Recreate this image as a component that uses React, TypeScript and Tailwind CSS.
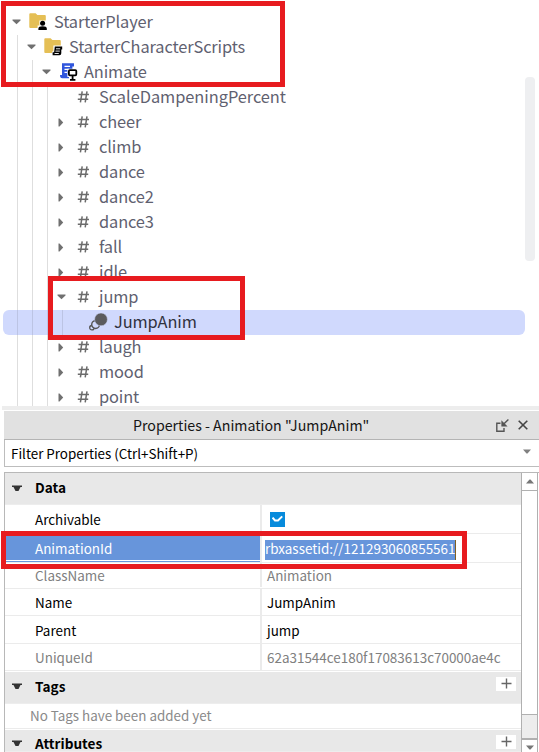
import type { ReactNode } from "react";

type NodeIcon = "player" | "scripts" | "animate" | "hash" | "anim";

interface TreeNode {
  label: string;
  level: number;
  arrow: "open" | "closed" | "none";
  icon: NodeIcon;
}

const nodes: TreeNode[] = [
  { label: "StarterPlayer", level: 0, arrow: "open", icon: "player" },
  { label: "StarterCharacterScripts", level: 1, arrow: "open", icon: "scripts" },
  { label: "Animate", level: 2, arrow: "open", icon: "animate" },
  { label: "ScaleDampeningPercent", level: 3, arrow: "none", icon: "hash" },
  { label: "cheer", level: 3, arrow: "closed", icon: "hash" },
  { label: "climb", level: 3, arrow: "closed", icon: "hash" },
  { label: "dance", level: 3, arrow: "closed", icon: "hash" },
  { label: "dance2", level: 3, arrow: "closed", icon: "hash" },
  { label: "dance3", level: 3, arrow: "closed", icon: "hash" },
  { label: "fall", level: 3, arrow: "closed", icon: "hash" },
  { label: "idle", level: 3, arrow: "closed", icon: "hash" },
  { label: "jump", level: 3, arrow: "open", icon: "hash" },
  { label: "JumpAnim", level: 4, arrow: "none", icon: "anim" },
  { label: "laugh", level: 3, arrow: "closed", icon: "hash" },
  { label: "mood", level: 3, arrow: "closed", icon: "hash" },
  { label: "point", level: 3, arrow: "closed", icon: "hash" },
];

function Folder() {
  return (
    <path d="M0.3 4.2Q0.3 3.2 1.3 3.2H6.6L8.4 5H15.8Q16.8 5 16.8 6V18H1.3Q0.3 18 0.3 17Z" fill="#e5bf55" />
  );
}

function Icon({ kind }: { kind: NodeIcon }) {
  if (kind === "hash") {
    return (
      <svg width="20" height="25" viewBox="0 0 20 25" fill="none" stroke="#6b6b6b" strokeWidth="1.5">
        <path d="M8.2 6.4L6.4 17.4M13 6.4L11.2 17.4M4.6 9.6H15M3.8 14.2H14.2" />
      </svg>
    );
  }
  if (kind === "anim") {
    return (
      <svg width="20" height="25" viewBox="0 0 20 25" fill="none">
        <circle cx="2.9" cy="17.7" r="2.2" stroke="#555" strokeWidth="1.3" />
        <circle cx="6.6" cy="14.6" r="3.9" fill="#d0d9fd" stroke="#555" strokeWidth="1.4" />
        <circle cx="12" cy="9.4" r="6.4" fill="#5b5b5e" stroke="#d0d9fd" strokeWidth="0.5" />
      </svg>
    );
  }
  if (kind === "animate") {
    return (
      <svg width="20" height="25" viewBox="0 0 20 25" fill="none">
        <path d="M3 3.3H15V6.5H13.4V14H10V18.2H3.3Q1 18.2 1 15H3Z" fill="#2f55dc" />
        <path d="M5.5 6.4H11M5.5 9.4H10M5.5 12.4H8" stroke="white" strokeWidth="1.2" />
        <path d="M8.4 8.8H18.8V17H16V21H10V17H8.4Z" fill="white" />
        <rect x="9.9" y="10.1" width="7.4" height="5.2" rx="1" stroke="black" strokeWidth="1.8" />
        <path d="M13.6 15V20M11 19.8H16.4" stroke="black" strokeWidth="1.8" />
      </svg>
    );
  }
  return (
    <svg width="20" height="25" viewBox="0 0 20 25" fill="none">
      <Folder />
      {kind === "player" ? (
        <>
          <path d="M10.4 10.4H17V15H18.5V21H8.6V15.6H10.4Z" fill="white" />
          <circle cx="13.6" cy="13.3" r="2.5" fill="black" />
          <path d="M9.4 20V18.4Q9.4 16.2 13.6 16.2T17.8 18.4V20Z" fill="black" />
        </>
      ) : (
        <>
          <path d="M9.4 10.6H19V15H18V21H8V16.5H9.4Z" fill="white" />
          <path d="M10.8 11.6H18.2V14.4H17.3V18.2Q17.3 20.3 15.4 20.3H8.6V17.3H10.1Z" fill="black" />
          <path d="M12 13.8H16.2M11.5 16.1H15.8M10.6 18.5H14.8" stroke="white" strokeWidth="0.9" />
        </>
      )}
    </svg>
  );
}

function TreeRow({ node }: { node: TreeNode }) {
  const selected = node.icon === "anim";
  const long = node.label.length === 21;
  return (
    <div className={`mr-[14px] ml-[3px] flex h-[25px] shrink-0 ${selected ? "rounded-[6px] bg-[#d0d9fd]" : ""}`}>
      {Array.from({ length: node.level }, (_, i) => (
        <div key={i} className={`w-[15px] shrink-0 border-r ${selected ? "border-[#bcc4e4]" : "border-[#dedede]"}`} />
      ))}
      <div className="flex w-[26px] shrink-0 items-center justify-center pb-px">
        {node.arrow === "open" && (
          <svg width="9" height="6" viewBox="0 0 9 6" fill="#707070"><path d="M0.5 0.5H8.5V1.5L4.5 5.2L0.5 1.5Z" /></svg>
        )}
        {node.arrow === "closed" && (
          <svg width="6" height="9" viewBox="0 0 6 9" fill="#707070"><path d="M0.5 0.5V8.5H1.5L5.2 4.5L1.5 0.5Z" /></svg>
        )}
      </div>
      <div className="w-[25px] shrink-0"><Icon kind={node.icon} /></div>
      <span className={`text-[16.4px] leading-[23px] whitespace-nowrap ${long ? "tracking-[-0.05px]" : "tracking-[-0.12px]"} ${selected ? "text-[#30323f]" : "text-[#5f6170]"}`}>
        {node.label}
      </span>
    </div>
  );
}

function DropArrow() {
  return (
    <svg width="10" height="7" viewBox="0 0 10 7" fill="#333"><path d="M0 0.5H10V2L8.5 2L6.5 6H3.5L1.5 2L0 2Z" /></svg>
  );
}

function Section({ title, add, height, head = "h-[29px]", label = "pb-[2px]" }: { title: string; add?: boolean; height: string; head?: string; label?: string }) {
  return (
    <div className={`flex shrink-0 justify-between border-b border-[#ededed] bg-[#e8e8e8] pr-[5px] pl-[7px] ${height}`}>
      <div className={`flex items-center ${head}`}>
        <DropArrow />
        <span className={`ml-[13px] text-[13.6px] leading-[20px] font-bold ${label}`}>{title}</span>
      </div>
      {add && (
        <div className="mt-[5px] flex h-[14px] w-5 justify-center bg-white">
          <svg width="11" height="11" viewBox="0 0 11 11" stroke="#666" strokeWidth="1.4" className="mt-px"><path d="M5.5 0.5V10.5M0.5 5.5H10.5" /></svg>
        </div>
      )}
    </div>
  );
}

function Row({ name, children, height, muted, active }: { name: string; children: ReactNode; height: string; muted?: boolean; active?: boolean }) {
  return (
    <div className={`flex shrink-0 border-b border-[#ebebeb] text-[13.45px] leading-[24px] ${height} ${muted ? "text-[#808080]" : "text-black"}`}>
      <div className={`flex w-[257px] shrink-0 items-center border-r-2 border-r-[#ebebeb] pl-[30px] ${active ? "bg-[#6795db] text-white shadow-[inset_0_-1px_#6795db,inset_0_-2px_white]" : ""}`}>{name}</div>
      <div className="flex items-center pl-[5px]">{children}</div>
    </div>
  );
}

export default function App() {
  return (
    <div className="relative flex h-[752px] w-[539px] flex-col overflow-hidden bg-white font-['Noto_Sans_CJK_SC','Noto_Sans',sans-serif]">
      <div className="relative flex h-[406px] shrink-0 flex-col overflow-hidden pt-[10px]">
        {nodes.map((node) => <TreeRow key={node.label} node={node} />)}
        <div className="absolute top-[77px] left-[525px] h-[184px] w-[10px] rounded-[4px] bg-[#eeeff1]" />
      </div>
      <div className="ml-[2px] h-[4px] shrink-0 bg-[#ededed]" />
      <div className="mt-px ml-1 flex h-[29px] shrink-0 items-center border-b border-[#b4b4b4] bg-[#e1e1e1] text-[#151515]">
        <span className="ml-[129px] w-[363px] text-[14.2px] leading-[28px]">Properties - Animation "JumpAnim"</span>
        <svg width="13" height="13" viewBox="0 0 13 13" fill="none" stroke="#555" strokeWidth="1.4">
          <path d="M4.5 4.2H0.8V12.2H8V9M12.4 0.5L8 4.8" />
          <path d="M5.4 1.2V7.4H11.6Z" fill="#555" stroke="none" />
        </svg>
        <svg width="10" height="10" viewBox="0 0 10 10" stroke="#444" strokeWidth="1.6" className="ml-[9px]"><path d="M0.7 0.7L9.3 9.3M9.3 0.7L0.7 9.3" /></svg>
      </div>
      <div className="ml-1 flex h-[27px] shrink-0 items-center justify-between border-b border-l border-[#bdbdbd] pr-[8px] pl-[6px]">
        <span className="text-[13.4px] leading-[26px]">Filter Properties (Ctrl+Shift+P)</span>
        <svg width="8" height="5" viewBox="0 0 8 5" fill="#808080" className="mb-1"><path d="M0 0.5H8L4.5 4.5H3.5Z" /></svg>
      </div>
      <div className="mt-[5px] ml-1 flex h-[280px] shrink-0 border-t border-l border-[#b8b8b8]">
        <div className="flex w-[516px] shrink-0 flex-col overflow-hidden">
          <Section title="Data" height="h-[32px]" head="h-[30px]" />
          <div className="flex flex-col">
            <Row name="Archivable" height="h-[29px]">
              <div className="ml-[3px] flex size-[15px] items-center justify-center bg-[#078bdc]">
                <svg width="11" height="9" viewBox="0 0 11 9" fill="none" stroke="white" strokeWidth="2"><path d="M0.6 2.6L3 5.4H6L10.2 1.4" /></svg>
              </div>
            </Row>
            <Row name="AnimationId" height="h-[29px]" active>
              <span className="mt-1 -ml-[2px] h-5 border-r border-[#806020] bg-[#6795db] leading-[17px] text-white">rbxassetid://121293060855561</span>
            </Row>
            <Row name="ClassName" height="h-[26px] pb-px" muted>Animation</Row>
            <Row name="Name" height="h-[27px]">JumpAnim</Row>
            <Row name="Parent" height="h-[28px]">jump</Row>
            <Row name="UniqueId" height="h-[27px]" muted>62a31544ce180f17083613c70000ae4c</Row>
          </div>
          <div className="h-px shrink-0" />
          <Section title="Tags" add height="h-[32px]" />
          <div className="h-[25px] shrink-0 border-b border-[#ebebeb] pl-[25px] text-[13.4px] leading-[22px] text-[#8a8a8a]">No Tags have been added yet</div>
          <div className="h-px shrink-0" />
          <Section title="Attributes" add height="h-[22px]" head="h-[26px] shrink-0" label="" />
        </div>
        <div className="flex w-[17px] shrink-0 flex-col border-x border-[#b0b0b0]">
          <div className="flex h-[18px] shrink-0 items-center justify-center border-b border-[#b0b0b0]">
            <svg width="8" height="5" viewBox="0 0 8 5" fill="#777"><path d="M0 4.5H8L4.5 0.5H3.5Z" /></svg>
          </div>
          <div className="h-[223px] shrink-0" />
          <div className="h-[26px] shrink-0 border-t border-b-2 border-[#b0b0b0] bg-[#ededed]" />
          <div className="flex justify-center pt-[5px]">
            <svg width="8" height="5" viewBox="0 0 8 5" fill="#777"><path d="M0 0.5H8L4.5 4.5H3.5Z" /></svg>
          </div>
        </div>
      </div>
      <div className="absolute top-px left-px h-[86px] w-[284px] border-5 border-[#e71b1f]" />
      <div className="absolute top-[276px] left-[48px] h-[64px] w-[197px] border-5 border-[#e71b1f]" />
      <div className="absolute top-[531px] left-px h-[38px] w-[466px] border-5 border-[#e71b1f]" />
    </div>
  );
}
